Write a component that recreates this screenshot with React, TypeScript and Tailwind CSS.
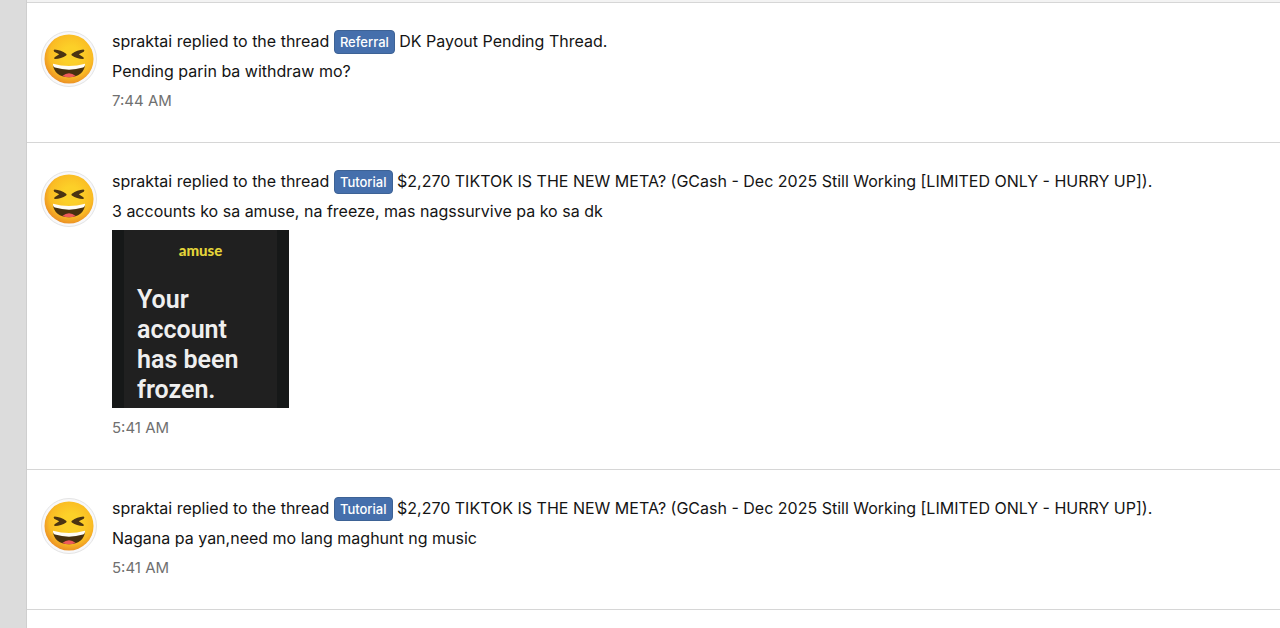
import React from 'react';

type FeedItem = {
  id: number;
  user: string;
  prefix: string;
  title: string;
  message: string;
  time: string;
  hasAttachment?: boolean;
};

const TIKTOK_TITLE = '$2,270 TIKTOK IS THE NEW META? (GCash - Dec 2025 Still Working [LIMITED ONLY - HURRY UP])';

const items: FeedItem[] = [
  {
    id: 1,
    user: 'spraktai',
    prefix: 'Referral',
    title: 'DK Payout Pending Thread',
    message: 'Pending parin ba withdraw mo?',
    time: '7:44 AM',
  },
  {
    id: 2,
    user: 'spraktai',
    prefix: 'Tutorial',
    title: TIKTOK_TITLE,
    message: '3 accounts ko sa amuse, na freeze, mas nagssurvive pa ko sa dk',
    time: '5:41 AM',
    hasAttachment: true,
  },
  {
    id: 3,
    user: 'spraktai',
    prefix: 'Tutorial',
    title: TIKTOK_TITLE,
    message: 'Nagana pa yan,need mo lang maghunt ng music',
    time: '5:41 AM',
  },
];

const LaughingFace: React.FC = () => (
  <svg viewBox="0 0 52 52" className="size-full" aria-hidden="true">
    <defs>
      <radialGradient id="face" cx="54%" cy="42%" r="58%">
        <stop offset="0.3" stopColor="#fcd028" />
        <stop offset="0.75" stopColor="#fabc24" />
        <stop offset="1" stopColor="#ec9225" />
      </radialGradient>
    </defs>
    <circle cx="26" cy="26" r="25.5" fill="url(#face)" />
    <path
      d="M11 16.2Q17.600 16.600 23 20.500Q24.200 21.500 23 22.400Q18 25.800 11.400 26Q9.800 25.600 11 24.100L15.800 21L10.600 18.400Q9.200 16.800 11 16.200ZM41 16.200Q34.400 16.600 29 20.500Q27.800 21.500 29 22.400Q34 25.800 40.600 26Q42.200 25.600 41 24.100L36.200 21L41.400 18.400Q42.800 16.800 41 16.200Z"
      fill="#4b3412"
    />
    <path d="M9.400 32Q26 38 42.600 32C42 39.600 36 45 26 45S10 39.600 9.400 32Z" fill="#47310f" />
    <path d="M19 43.600q7-5.400 14 0q-7 2.600-14 0Z" fill="#ee5a59" />
    <path d="M9.400 31Q26 35.800 42.600 31C42.900 33 42.200 34.200 40.600 34.900Q26 39.400 11.400 34.900C9.800 34.200 9.100 33 9.400 31Z" fill="#fffdf5" />
  </svg>
);

const Attachment: React.FC = () => (
  <div className="mt-1 mb-[5px] w-[177px] h-[178px] overflow-hidden bg-[#202020] border-x-12 border-[#161818] px-[13px] pt-3">
    <div className="text-center font-['Lato'] text-[15px] leading-4 font-black text-[#e3d43a]">amuse</div>
    <p className="mt-[27px] font-['Roboto'] text-[25px] leading-[30px] font-semibold text-[#efefef]">
      Your<br />account<br />has been<br />frozen.
    </p>
  </div>
);

const FeedRow: React.FC<{ item: FeedItem }> = ({ item }) => (
  <li className="flex gap-[15px] border-b border-[#d6d6d6] pl-3.5 pr-4 pt-[23px] pb-[26px]">
    <a
      href="#member"
      aria-label={item.user}
      className="mt-[5px] size-14 shrink-0 rounded-full border border-[#e4e4e4] bg-[#f8f8fa] p-0.5"
    >
      <LaughingFace />
    </a>
    <div className="min-w-0 flex-1 text-base leading-[30px]">
      <div>
        <a href="#member">{item.user}</a> replied to the thread{' '}
        <a href="#thread">
          <span className="inline-block rounded-sm border border-[#3d6295] bg-[#456fac] px-[5px] text-[13px] leading-[22px] font-medium text-white">
            {item.prefix}
          </span>{' '}
          {item.title}
        </a>
        .
      </div>
      <div>{item.message}</div>
      {item.hasAttachment && <Attachment />}
      <time className="block text-[15px] text-[#707070]">{item.time}</time>
    </div>
  </li>
);

export default function App() {
  return (
    <div className="min-h-screen bg-[#dcdcdc] pl-[26px] font-['Inter',sans-serif] text-[#141414]">
      <main className="min-h-screen border-l border-[#cfcfcf] bg-white">
        <div className="h-0.5 bg-[#f3f3f3]" />
        <ul className="border-t border-[#d6d6d6]">
          {items.map((item) => (
            <FeedRow key={item.id} item={item} />
          ))}
        </ul>
      </main>
    </div>
  );
}
